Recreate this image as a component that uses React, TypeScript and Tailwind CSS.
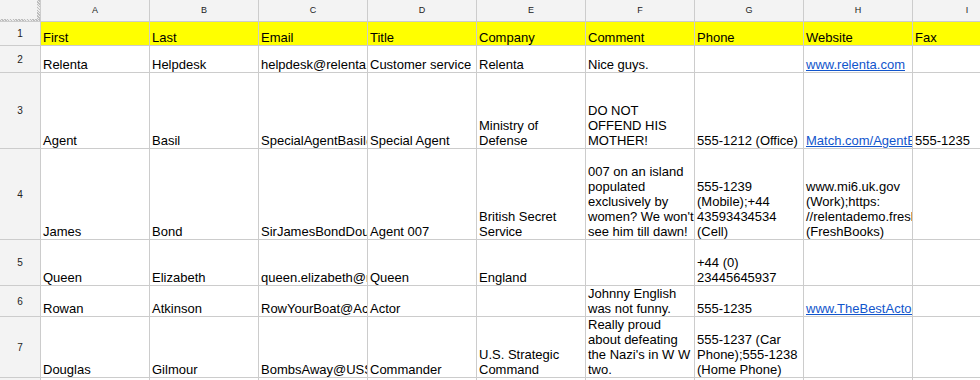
import React from "react";

type Cell = string | string[] | { link: string };

const COLS = ["A", "B", "C", "D", "E", "F", "G", "H", "I"];

const HEADER: Cell[] = ["First", "Last", "Email", "Title", "Company", "Comment", "Phone", "Website", "Fax"];

const ROWS: { n: number; h: string; cells: Cell[] }[] = [
  {
    n: 2,
    h: "h-[26px]",
    cells: ["Relenta", "Helpdesk", "helpdesk@relenta.com", "Customer service", "Relenta", "Nice guys.", "", { link: "www.relenta.com" }, ""],
  },
  {
    n: 3,
    h: "h-[75px]",
    cells: [
      "Agent",
      "Basil",
      "SpecialAgentBasil@mi5.gov.uk",
      "Special Agent",
      ["Ministry of", "Defense"],
      ["DO NOT", "OFFEND HIS", "MOTHER!"],
      "555-1212 (Office)",
      { link: "Match.com/AgentBasil" },
      "555-1235",
    ],
  },
  {
    n: 4,
    h: "h-[90px]",
    cells: [
      "James",
      "Bond",
      "SirJamesBondDouble0Seven@mi6.uk.gov",
      "Agent 007",
      ["British Secret", "Service"],
      ["007 on an island", "populated", "exclusively by", "women? We won't", "see him till dawn!"],
      ["555-1239", "(Mobile);+44", "43593434534", "(Cell)"],
      ["www.mi6.uk.gov", "(Work);https:", "//relentademo.freshbooks.com", "(FreshBooks)"],
      "",
    ],
  },
  {
    n: 5,
    h: "h-[45px]",
    cells: ["Queen", "Elizabeth", "queen.elizabeth@royal.gov.uk", "Queen", "England", "", ["+44 (0)", "23445645937"], "", ""],
  },
  {
    n: 6,
    h: "h-[30px]",
    cells: [
      "Rowan",
      "Atkinson",
      "RowYourBoat@Actors.com",
      "Actor",
      "",
      ["Johnny English", "was not funny."],
      "555-1235",
      { link: "www.TheBestActor.com" },
      "",
    ],
  },
  {
    n: 7,
    h: "h-[60px]",
    cells: [
      "Douglas",
      "Gilmour",
      "BombsAway@USStratCom.mil",
      "Commander",
      ["U.S. Strategic", "Command"],
      ["Really proud", "about defeating", "the Nazi's in W W", "two."],
      ["555-1237 (Car", "Phone);555-1238", "(Home Phone)"],
      "",
      "",
    ],
  },
  {
    n: 8,
    h: "h-[21px]",
    cells: ["", "", "", "", "", "", "", "", ""],
  },
];

function CellView({ cell, yellow }: { cell: Cell; yellow?: boolean }) {
  let inner: React.ReactNode = null;
  if (typeof cell === "string") {
    inner = <div className="whitespace-nowrap">{cell}</div>;
  } else if (Array.isArray(cell)) {
    inner = cell.map((l, i) => (
      <div key={i} className="whitespace-nowrap">
        {l}
      </div>
    ));
  } else {
    inner = <div className="whitespace-nowrap text-[#1155cc] underline">{cell.link}</div>;
  }
  return (
    <div
      className={`flex flex-col justify-end overflow-hidden pl-[2px] pr-[3px] text-[13px] leading-[15px] text-black ${
        yellow ? "bg-[#ffff00]" : "bg-white"
      }`}
    >
      {inner}
    </div>
  );
}

export default function App() {
  return (
    <div className="w-[980px] h-[380px] overflow-hidden bg-white font-['Liberation_Sans',Arial,sans-serif]">
      <div className="grid w-max grid-cols-[40px_repeat(9,108px)] gap-px bg-[#cccccc]">
        {/* column header row */}
        <div className="flex h-[21px] flex-col bg-[#f3f3f3]">
          <div className="flex flex-1">
            <div className="flex-1 bg-[#f3f3f3]" />
            <div className="w-[3px] bg-[repeating-linear-gradient(45deg,#bdbdbd_0px,#bdbdbd_1px,#ececec_1px,#ececec_2px)]" />
          </div>
          <div className="h-[2px] bg-[repeating-linear-gradient(45deg,#bdbdbd_0px,#bdbdbd_1px,#ececec_1px,#ececec_2px)]" />
        </div>
        {COLS.map((c) => (
          <div key={c} className="flex h-[21px] items-center justify-center bg-[#f3f3f3] text-[9px] text-[#222222]">
            {c}
          </div>
        ))}

        {/* row 1 */}
        <div className="flex h-[23px] items-center justify-center bg-[#f3f3f3] text-[10px] text-[#222222]">1</div>
        {HEADER.map((h, i) => (
          <CellView key={i} cell={h} yellow />
        ))}

        {ROWS.map((r) => (
          <React.Fragment key={r.n}>
            <div className={`flex ${r.h} items-center justify-center bg-[#f3f3f3] text-[10px] text-[#222222]`}>{r.n}</div>
            {r.cells.map((c, i) => (
              <CellView key={i} cell={c} />
            ))}
          </React.Fragment>
        ))}
      </div>
    </div>
  );
}
